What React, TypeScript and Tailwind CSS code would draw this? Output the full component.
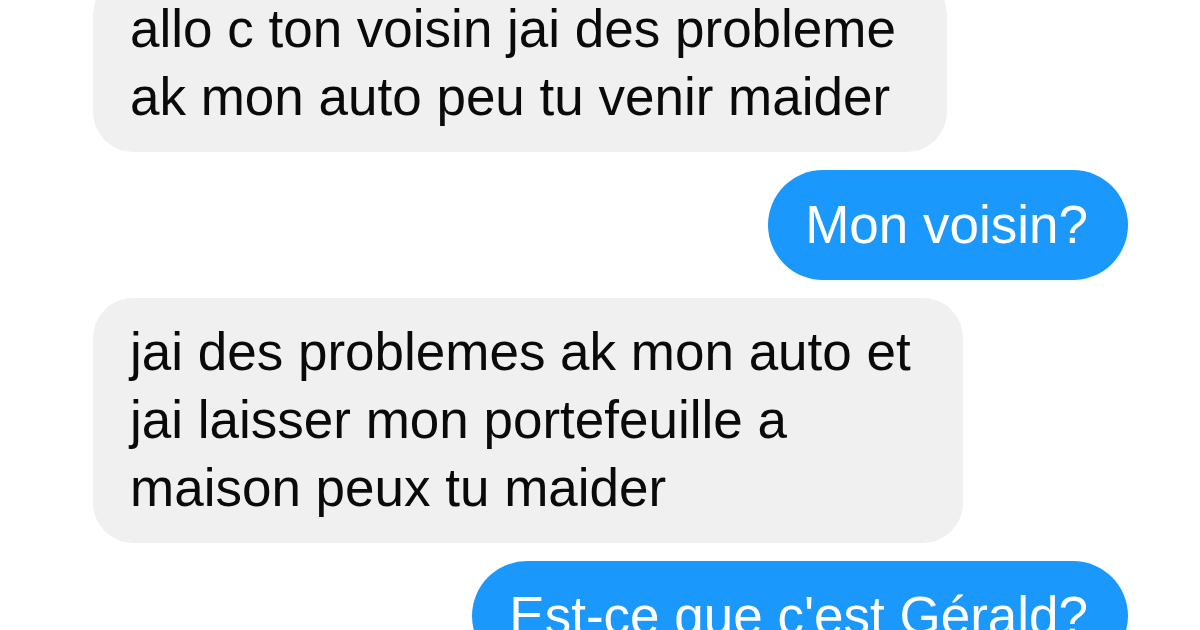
import React from 'react';

type Msg = { from: 'them' | 'me'; lines: string[]; width?: string };

const messages: Msg[] = [
    { from: 'them', lines: ['allo c ton voisin jai des probleme', 'ak mon auto peu tu venir maider'], width: 'w-[854px]' },
    { from: 'me', lines: ['Mon voisin?'] },
    { from: 'them', lines: ['jai des problemes ak mon auto et', 'jai laisser mon portefeuille a', 'maison peux tu maider'], width: 'w-[870px]' },
    { from: 'me', lines: ["Est-ce que c'est Gérald?"] },
];

const App: React.FC = () => {
    return (
        <div className="w-[1200px] h-[630px] overflow-hidden bg-white" style={{ fontFamily: '"Liberation Sans", Arial, sans-serif' }}>
            <div className="-mt-[25px] flex flex-col gap-[18px] pl-[93px] pr-[72px]">
                {messages.map((m, i) =>
                    m.from === 'them' ? (
                        <div key={i} className="flex justify-start">
                            <div className={`${m.width} rounded-[40px] bg-[#f0f0f0] pl-[37px] pr-6 pt-[20px] pb-[21px] text-[53px] leading-[68px] text-[#0a0a0a] whitespace-nowrap`}>
                                {m.lines.map(l => <div key={l}>{l}</div>)}
                            </div>
                        </div>
                    ) : (
                        <div key={i} className="flex justify-end">
                            <div className="h-[110px] rounded-full bg-[#1b98fc] pl-[37px] pr-[40px] text-[53px] leading-[110px] text-white whitespace-nowrap">
                                {m.lines[0]}
                            </div>
                        </div>
                    )
                )}
            </div>
        </div>
    );
};

export default App;
